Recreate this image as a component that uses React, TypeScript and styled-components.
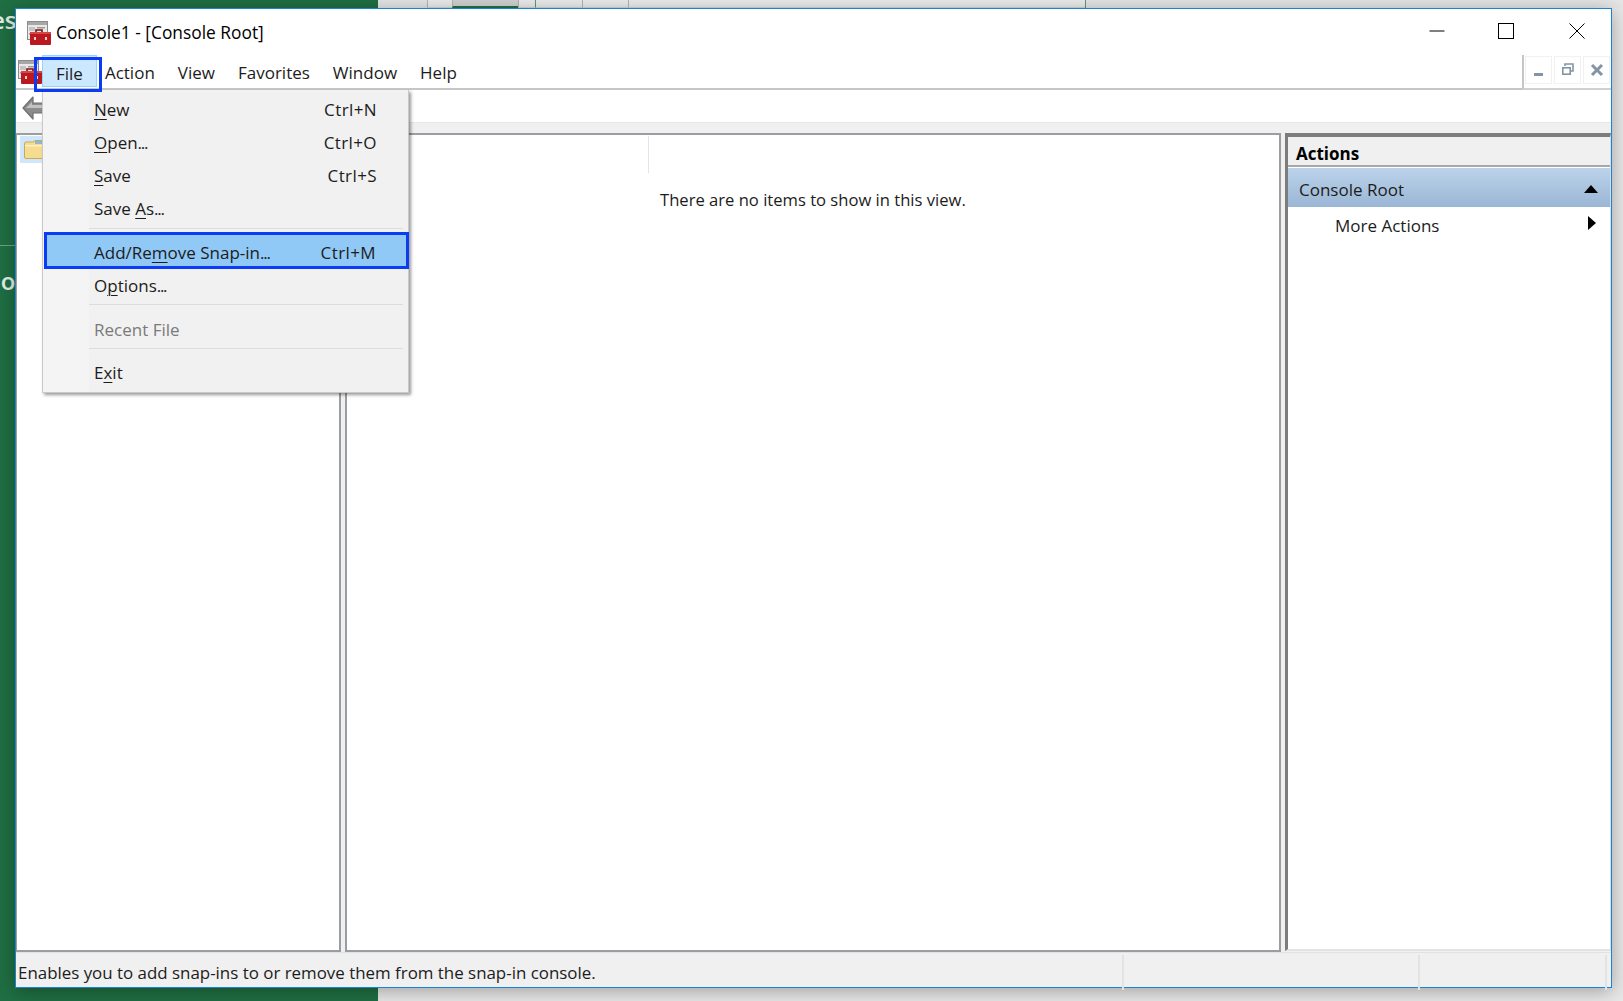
import React from "react";
import styled, { createGlobalStyle } from "styled-components";

const Global = createGlobalStyle`
  html, body { margin: 0; padding: 0; width: 1623px; height: 1001px; overflow: hidden; background: #e6e6e6; }
  * { box-sizing: border-box; }
  body { font-family: "Open Sans", "Noto Sans", "Liberation Sans", sans-serif; color: #1c1c1c; }
`;

const Desktop = styled.div`
  position: relative; width: 1623px; height: 1001px; display: grid; grid-template-columns: 378px 1fr; overflow: hidden;
`;
const GreenSide = styled.div`
  background: #1f6f43; color: #e4efe9; display: flex; flex-direction: column; overflow: hidden;
`;
const GreenText = styled.div<{ $top: number; $shift: number }>`
  font-size: 24px; font-weight: 600; line-height: 28px; height: 28px; margin-top: ${p => p.$top}px; margin-left: ${p => p.$shift}px;
`;
const GreenRule = styled.div`
  height: 1px; background: #6fa287; margin-top: 211px;
`;
const GreySide = styled.div`
  background: #e8e8e8;
`;
const Ribbon = styled.div`
  display: flex; height: 8px; padding-left: 49px; background: #e6e6e6;
`;
const RibbonCell = styled.div<{ $w: number; $selected?: boolean; $green?: boolean }>`
  width: ${p => p.$w}px; height: 8px;
  background: ${p => (p.$selected ? "#d2d2d2" : "#ededed")};
  border-left: 1px solid ${p => (p.$green ? "#5b9a78" : "#b5b5b5")};
  border-bottom: ${p => (p.$selected ? "2px solid #217346" : "1px solid #d8d8d8")};
`;
const RibbonEnd = styled.div`
  width: 1px; height: 8px; background: #5b9a78;
`;

const Window = styled.div`
  position: absolute; left: 15px; top: 8px; width: 1597px; height: 980px;
  border: 1px solid #1883d7; background: #fff; display: flex; flex-direction: column;
  box-shadow: 0 3px 18px rgba(0, 0, 0, 0.32);
`;
const TitleBar = styled.div`
  height: 47px; flex: none; display: flex; align-items: center; background: #fff; padding-left: 11px;
`;
const TitleText = styled.div`
  font-size: 17.35px; line-height: 24px; color: #000; margin-left: 5px; margin-top: -2px; flex: 1;
`;
const CaptionButton = styled.div<{ $gap?: number }>`
  width: 69px; height: 47px; display: flex; align-items: center; justify-content: center; margin-left: ${p => p.$gap ?? 0}px; margin-top: -3px;
`;
const MenuBar = styled.div`
  height: 34px; flex: none; display: flex; align-items: stretch; padding-left: 2px; border-bottom: 2px solid #c6c6c6; background: #fff;
`;
const MenuIcon = styled.div`
  width: 24px; display: flex; align-items: flex-start; padding-top: 4px;
`;
const MenuItem = styled.div`
  font-size: 17px; line-height: 32px; padding: 0 11.5px; color: #1c1c1c;
  height: 32px; margin-top: 1px;
`;
const ActiveMenuItem = styled(MenuItem)`
  background: #cce8ff; border: 1px solid #99d1ff; padding: 0 13px; line-height: 36px; margin-top: -1px; margin-right: -3.5px;
`;
const MenuSpacer = styled.div` flex: 1; `;
const MdiGroup = styled.div`
  display: flex; gap: 2px; align-items: flex-start; padding: 1px 1px 0 1px; margin-top: -1px; margin-bottom: -2px;
  border-left: 2px solid #c6c6c6; height: 35px; background: #fff; border-bottom: 2px solid #d0d0d0;
`;
const MdiButton = styled.div`
  width: 27px; height: 28px; border: 1px solid #f1f1f1; background: #fff; display: flex; align-items: center; justify-content: center;
`;
const Toolbar = styled.div`
  height: 33px; flex: none; display: flex; align-items: center; background: #fff; padding: 4px 0 0 6px; border-bottom: 1px solid #e6e6e6;
`;
const Workspace = styled.div`
  flex: 1; min-height: 0; background: #f0f0f0; padding-top: 10px; display: grid;
  grid-template-columns: 325px 936px 326px; column-gap: 4px;
`;
const TreePane = styled.div`
  background: #fff; border: 2px solid #9a9ea2; border-left-width: 1px; padding: 1px 0 0 3px;
`;
const TreeSelected = styled.div`
  width: 30px; height: 27px; background: #cfe6fb; padding: 4px 0 0 4px;
`;
const CenterPane = styled.div`
  background: #fff; border: 2px solid #9a9ea2;
`;
const ColumnHeader = styled.div`
  height: 37px; margin-top: 1px; width: 302px; border-right: 1px solid #e4e4e4;
`;
const EmptyText = styled.div`
  font-size: 16.6px; line-height: 24px; color: #1c1c1c; padding-left: 313px; margin-top: 15px;
`;
const ActionsPane = styled.div`
  background: #fff; border-top: 4px solid #7c7c7c; border-left: 3px solid #7c7c7c; border-right: 1px solid #dcdcdc; border-bottom: 2px solid #e2e2e2; margin-bottom: 1px;
`;
const ActionsTitle = styled.div`
  height: 30px; background: #f0f0f0; border-bottom: 2px solid #a8a8a8; font-size: 17px; font-weight: 700; line-height: 33px; padding-left: 8px; color: #000;
`;
const ActionsGroup = styled.div`
  height: 39px; margin-top: 1px; background: linear-gradient(#bcd3ea, #9ab6d5); display: flex; align-items: center; justify-content: space-between;
  font-size: 17px; padding: 3px 12px 0 11px; color: #1c1c1c;
`;
const ActionsRow = styled.div`
  height: 36px; display: flex; align-items: center; justify-content: space-between; font-size: 17px; padding: 0 14px 0 47px; color: #1c1c1c;
`;
const RowArrow = styled.span`
  display: flex; margin-top: -4px;
`;
const StatusBar = styled.div`
  height: 35px; flex: none; background: #f0f0f0; border-top: 1px solid #e2e2e2; display: grid; grid-template-columns: 1108px 296px 187px 1fr;
`;
const StatusCell = styled.div`
  font-size: 16.9px; line-height: 35px; padding-left: 2px; color: #1c1c1c; border-right: 2px solid #e3e3e3; margin-top: 2px; white-space: nowrap;
`;

const Dropdown = styled.div`
  position: absolute; left: 42px; top: 90px; width: 367px; height: 303px; padding: 3px 0 4px;
  background: linear-gradient(90deg, #f4f4f4 46px, #f1f1f1 46px);
  border: 1px solid #c9c9c9; border-top: none; box-shadow: 2px 2px 3px rgba(0, 0, 0, 0.4);
`;
const Row = styled.div<{ $disabled?: boolean }>`
  height: 33px; display: flex; align-items: center; justify-content: space-between; padding: 0 31px 0 51px;
  font-size: 17px; color: ${p => (p.$disabled ? "#7a7a7a" : "#1c1c1c")};
`;
const HighlightRow = styled(Row)`
  height: 37px; margin: 0 -1px 0 1px; padding: 4px 30px 0 47px; background: #90c8f6; border: 3px solid #0b3cf5;
`;
const Shortcut = styled.span`
  letter-spacing: 0.4px;
`;
const Sep = styled.div<{ $top: number; $bottom: number }>`
  height: 1px; background: #dcdcdc; margin: ${p => p.$top}px 5px ${p => p.$bottom}px 46px;
`;
const Key = styled.span`
  text-decoration: underline; text-underline-offset: 3px; text-decoration-thickness: 1px;
`;
const Dots = styled.span`
  letter-spacing: -1.3px;
`;
const FileOutline = styled.div`
  position: absolute; left: 34px; top: 57px; width: 68px; height: 35px; border: 3px solid #0b3cf5;
`;

const SnapinIcon = () => (
  <svg width="24" height="24" viewBox="0 0 24 24">
    <rect x="0.5" y="0.5" width="20" height="18" fill="#e9e9e9" stroke="#8c8c8c" />
    <rect x="1" y="1" width="19" height="3" fill="#a7a7a7" />
    <rect x="2" y="6" width="6" height="4" fill="#c4c4c4" />
    <rect x="10" y="6" width="8" height="1.5" fill="#9a9a9a" />
    <rect x="2" y="12" width="5" height="1.5" fill="#9a9a9a" />
    <path d="M9 12 V9 H15 V12" fill="none" stroke="#7c1010" strokeWidth="1.6" />
    <rect x="3" y="11" width="21" height="13" rx="1" fill="#b9191f" />
    <rect x="3" y="11" width="21" height="2" fill="#d94444" />
    <rect x="7" y="16" width="2" height="3" fill="#f0d0c0" />
    <rect x="18" y="16" width="2" height="3" fill="#f0d0c0" />
  </svg>
);
const BackArrow = () => (
  <svg width="22" height="24" viewBox="0 0 22 24">
    <path d="M11 1 L1 12 L11 23 V17 H22 V7 H11 Z" fill="#8c8c8c" stroke="#6f6f6f" strokeWidth="1.2" strokeLinejoin="round" />
    <path d="M10 6 L4 12 H22 V9 H10 Z" fill="#c2c2c2" />
  </svg>
);
const FolderIcon = () => (
  <svg width="22" height="19" viewBox="0 0 22 19">
    <path d="M0.5 4 Q0.5 2 2 2 H9 L11 0.5 H22 V18.5 H2 Q0.5 18.5 0.5 17 Z" fill="#f6dc8e" stroke="#c9a95b" />
    <rect x="11" y="1" width="11" height="3" fill="#8fb7d8" />
    <rect x="1" y="5" width="21" height="1.5" fill="#fdf0c4" />
  </svg>
);
const Minimize = () => (
  <svg width="16" height="16" viewBox="0 0 16 16"><path d="M0.5 8 H15.5" stroke="#000" strokeWidth="1" /></svg>
);
const Maximize = () => (
  <svg width="16" height="16" viewBox="0 0 16 16"><rect x="0.5" y="0.5" width="15" height="15" fill="none" stroke="#000" strokeWidth="1" /></svg>
);
const Close = () => (
  <svg width="16" height="16" viewBox="0 0 16 16"><path d="M0.5 0.5 L15.5 15.5 M15.5 0.5 L0.5 15.5" stroke="#000" strokeWidth="1" /></svg>
);
const MdiMin = () => (
  <svg width="14" height="14" viewBox="0 0 14 14"><rect x="2" y="10" width="9" height="3" fill="#8494a5" /></svg>
);
const MdiRestore = () => (
  <svg width="14" height="14" viewBox="0 0 14 14">
    <path d="M4 3 V1 H12 V8 H9" fill="none" stroke="#8494a5" strokeWidth="1.6" />
    <rect x="1.8" y="4.8" width="7.4" height="6.4" fill="#fff" stroke="#8494a5" strokeWidth="1.6" />
  </svg>
);
const MdiClose = () => (
  <svg width="14" height="14" viewBox="0 0 14 14"><path d="M2 2 L12 12 M12 2 L2 12" stroke="#8494a5" strokeWidth="3" /></svg>
);
const TriUp = () => (
  <svg width="14" height="8" viewBox="0 0 14 8"><path d="M7 0 L14 8 H0 Z" fill="#000" /></svg>
);
const TriRight = () => (
  <svg width="8" height="14" viewBox="0 0 8 14"><path d="M0 0 L8 7 L0 14 Z" fill="#000" /></svg>
);

export default function App() {
  return (
    <Desktop>
      <Global />
      <GreenSide>
        <GreenText $top={6} $shift={-9}>es</GreenText>
        <GreenRule />
        <GreenText $top={21} $shift={-14}>oo</GreenText>
      </GreenSide>
      <GreySide>
        <Ribbon>
          <RibbonCell $w={25} />
          <RibbonCell $w={66} $selected />
          <RibbonCell $w={17} />
          <RibbonCell $w={47} $green />
          <RibbonCell $w={46} />
          <RibbonCell $w={457} />
          <RibbonEnd />
        </Ribbon>
      </GreySide>
      <Window>
        <TitleBar>
          <SnapinIcon />
          <TitleText>Console1 - [Console Root]</TitleText>
          <CaptionButton><Minimize /></CaptionButton>
          <CaptionButton><Maximize /></CaptionButton>
          <CaptionButton $gap={2}><Close /></CaptionButton>
        </TitleBar>
        <MenuBar>
          <MenuIcon><SnapinIcon /></MenuIcon>
          <ActiveMenuItem>File</ActiveMenuItem>
          <MenuItem>Action</MenuItem>
          <MenuItem>View</MenuItem>
          <MenuItem>Favorites</MenuItem>
          <MenuItem>Window</MenuItem>
          <MenuItem>Help</MenuItem>
          <MenuSpacer />
          <MdiGroup>
            <MdiButton><MdiMin /></MdiButton>
            <MdiButton><MdiRestore /></MdiButton>
            <MdiButton><MdiClose /></MdiButton>
          </MdiGroup>
        </MenuBar>
        <Toolbar><BackArrow /></Toolbar>
        <Workspace>
          <TreePane>
            <TreeSelected><FolderIcon /></TreeSelected>
          </TreePane>
          <CenterPane>
            <ColumnHeader />
            <EmptyText>There are no items to show in this view.</EmptyText>
          </CenterPane>
          <ActionsPane>
            <ActionsTitle>Actions</ActionsTitle>
            <ActionsGroup>Console Root<TriUp /></ActionsGroup>
            <ActionsRow>More Actions<RowArrow><TriRight /></RowArrow></ActionsRow>
          </ActionsPane>
        </Workspace>
        <StatusBar>
          <StatusCell>Enables you to add snap-ins to or remove them from the snap-in console.</StatusCell>
          <StatusCell />
          <StatusCell />
        </StatusBar>
      </Window>
      <Dropdown>
        <Row><span><Key>N</Key>ew</span><Shortcut>Ctrl+N</Shortcut></Row>
        <Row><span><Key>O</Key>pen<Dots>...</Dots></span><Shortcut>Ctrl+O</Shortcut></Row>
        <Row><span><Key>S</Key>ave</span><Shortcut>Ctrl+S</Shortcut></Row>
        <Row><span>Save <Key>A</Key>s<Dots>...</Dots></span></Row>
        <Sep $top={3} $bottom={3} />
        <HighlightRow><span>Add/Re<Key>m</Key>ove Snap-in<Dots>...</Dots></span><Shortcut>Ctrl+M</Shortcut></HighlightRow>
        <Row><span>O<Key>p</Key>tions<Dots>...</Dots></span></Row>
        <Sep $top={2} $bottom={8} />
        <Row $disabled><span>Recent File</span></Row>
        <Sep $top={2} $bottom={7} />
        <Row><span>E<Key>x</Key>it</span></Row>
      </Dropdown>
      <FileOutline />
    </Desktop>
  );
}
